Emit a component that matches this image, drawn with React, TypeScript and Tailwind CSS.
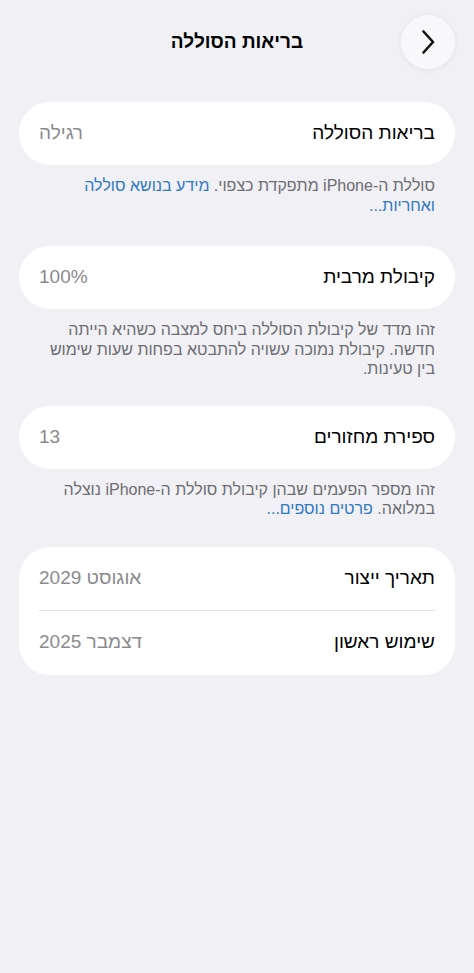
import React from "react";

const font = { fontFamily: '"Liberation Sans", "DejaVu Sans", sans-serif' };

function Card({ children }: { children: React.ReactNode }) {
  return <div className="mx-[19px] rounded-[31px] bg-white px-[20px]">{children}</div>;
}

function Row({ label, value, border, h = "h-[63px]" }: { label: string; value: string; border?: boolean; h?: string }) {
  return (
    <div className={"flex items-center justify-between " + h + " " + (border ? "border-b border-[#e3e3e6]" : "")}>
      <span className="text-[19px] text-black">{label}</span>
      <span className="text-[19px] text-[#8a8a8e]">{value}</span>
    </div>
  );
}

function Footer({ children }: { children: React.ReactNode }) {
  return (
    <p className="mx-[39px] mt-[11px] text-[16px] leading-[19.5px] text-[#6d6d72]">{children}</p>
  );
}

export default function App() {
  return (
    <div dir="rtl" style={font} className="min-h-[973px] w-[474px] bg-[#f0f0f5]">
      <div className="relative flex h-[84px] items-start justify-center pt-[15px]">
        <div className="absolute right-[19px] top-[15px] flex h-[54px] w-[54px] items-center justify-center rounded-full bg-[#f8f8fa] shadow-[0_1px_6px_rgba(0,0,0,0.06)]">
          <svg width="14" height="24" viewBox="0 0 14 24" fill="none">
            <path d="M2.5 1.5 L12 12 L2.5 22.5" stroke="#111" strokeWidth="2.6" strokeLinecap="round" strokeLinejoin="round" />
          </svg>
        </div>
        <h1 className="mt-[14px] text-[19px] font-semibold leading-[26px] text-black">בריאות הסוללה</h1>
      </div>

      <div className="mt-[18px]">
        <Card>
          <Row label="בריאות הסוללה" value="רגילה" />
        </Card>
        <Footer>
          סוללת ה-iPhone מתפקדת כצפוי.{" "}
          <span className="text-[#2f78c4]">מידע בנושא סוללה ואחריות...</span>
        </Footer>
      </div>

      <div className="mt-[31px]">
        <Card>
          <Row label="קיבולת מרבית" value="100%" />
        </Card>
        <Footer>
          זהו מדד של קיבולת הסוללה ביחס למצבה כשהיא הייתה חדשה. קיבולת נמוכה עשויה להתבטא בפחות שעות שימוש בין טעינות.
        </Footer>
      </div>

      <div className="mt-[27px]">
        <Card>
          <Row label="ספירת מחזורים" value="13" />
        </Card>
        <Footer>
          זהו מספר הפעמים שבהן קיבולת סוללת ה-iPhone נוצלה במלואה.{" "}
          <span className="text-[#2f78c4]">פרטים נוספים...</span>
        </Footer>
      </div>

      <div className="mt-[28px]">
        <div className="mx-[19px] rounded-[31px] bg-white px-[20px]">
          <Row label="תאריך ייצור" value="אוגוסט 2029" border h="h-[64px]" />
          <Row label="שימוש ראשון" value="דצמבר 2025" h="h-[64px]" />
        </div>
      </div>
    </div>
  );
}
